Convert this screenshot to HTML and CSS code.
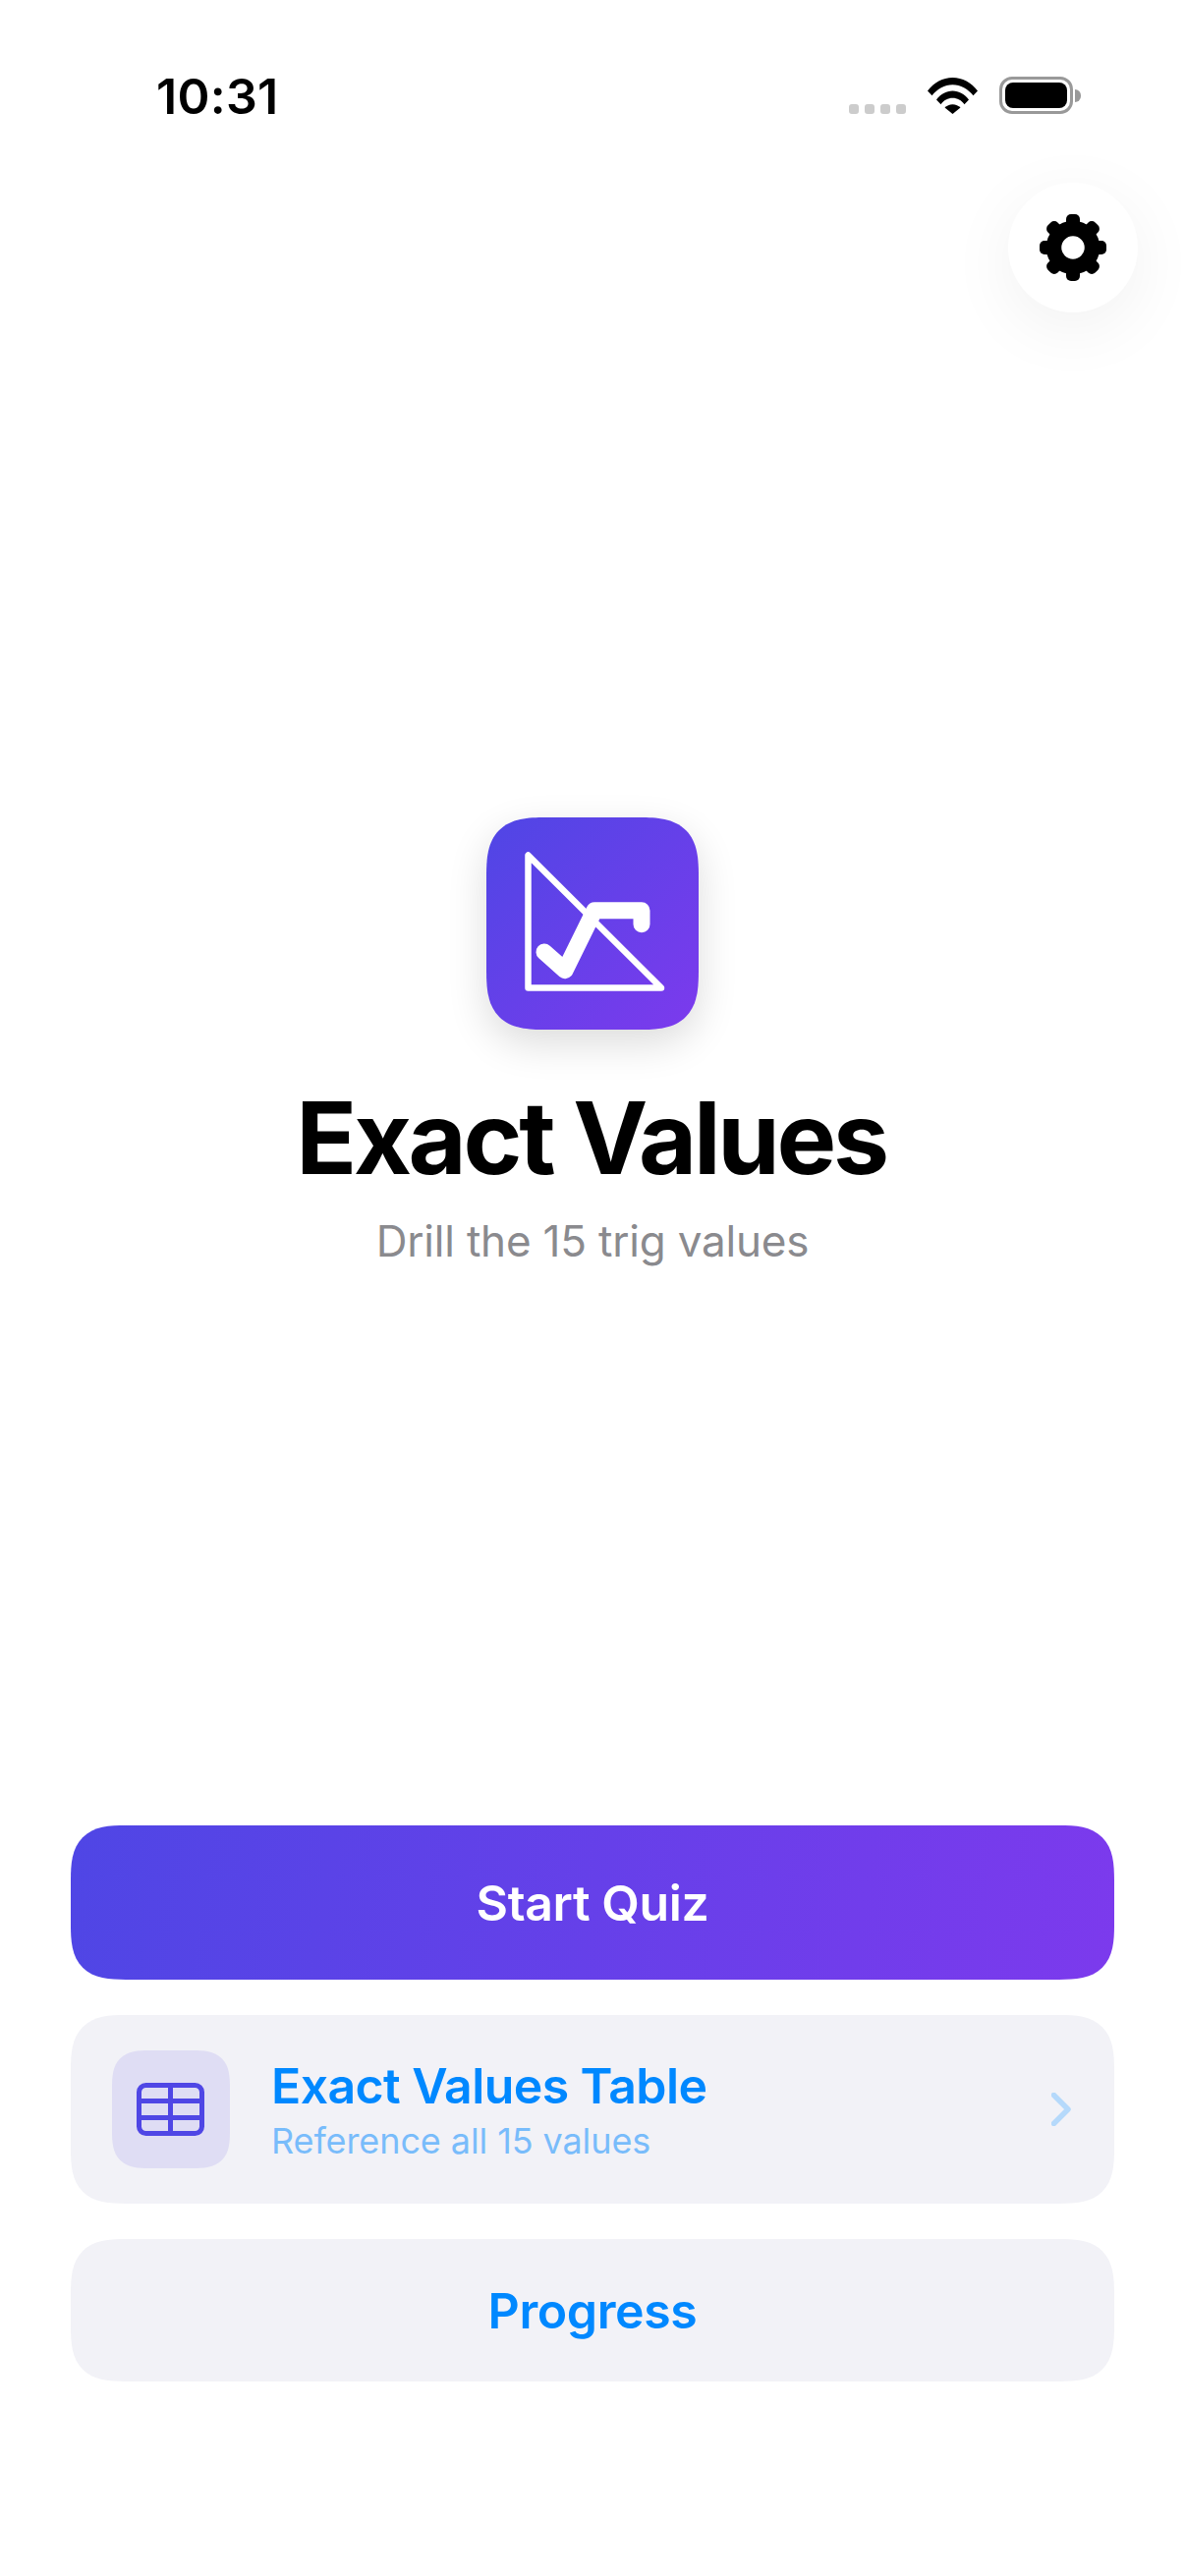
FILE: index.html
```html
<!DOCTYPE html>
<html lang="en">
<head>
    <meta charset="UTF-8">
    <meta name="viewport" content="width=device-width, initial-scale=1.0">
    <title>Exact Values</title>
    <link rel="stylesheet" href="styles.css">
</head>
<body>
    <div class="status-bar">
        <span class="time">10:31</span>
        <div class="status-icons">
            <div class="signal"><i></i><i></i><i></i><i></i></div>
            <svg class="wifi" width="51" height="37" viewBox="0 0 51 37">
                <path d="M0 13.5C6.500 5 15.500 0 25.500 0S44.500 5 51 13.500L46.500 18.200C41 11.500 33.800 7.200 25.500 7.200S10 11.500 4.500 18.200Z"/>
                <path d="M9 22.500C13 17 19 13.500 25.500 13.500S38 17 42 22.500L37.500 27.200C34.500 23.200 30.300 20.800 25.500 20.800S16.500 23.200 13.500 27.200Z"/>
                <path d="M17.500 30.500C19.500 28.500 22.300 27.200 25.500 27.200S31.500 28.500 33.500 30.500L25.500 37Z"/>
            </svg>
            <div class="battery"><div class="battery-fill"></div></div>
            <div class="battery-cap"></div>
        </div>
    </div>

    <div class="toolbar">
        <button class="settings-btn">
            <svg width="68" height="68" viewBox="0 0 68 68">
                <g class="gear-teeth">
                    <rect x="27" y="0" width="14" height="16" rx="5"/>
                    <rect x="27" y="0" width="14" height="16" rx="5" transform="rotate(45 34 34)"/>
                    <rect x="27" y="0" width="14" height="16" rx="5" transform="rotate(90 34 34)"/>
                    <rect x="27" y="0" width="14" height="16" rx="5" transform="rotate(135 34 34)"/>
                    <rect x="27" y="0" width="14" height="16" rx="5" transform="rotate(180 34 34)"/>
                    <rect x="27" y="0" width="14" height="16" rx="5" transform="rotate(225 34 34)"/>
                    <rect x="27" y="0" width="14" height="16" rx="5" transform="rotate(270 34 34)"/>
                    <rect x="27" y="0" width="14" height="16" rx="5" transform="rotate(315 34 34)"/>
                </g>
                <circle class="gear-ring" cx="34" cy="34" r="19.500"/>
            </svg>
        </button>
    </div>

    <div class="hero">
        <div class="app-icon">
            <svg width="216" height="216" viewBox="0 0 216 216">
                <path class="triangle" d="M42.500 38.500V173.500H178Z"/>
                <path class="root" d="M59 137L80 155.700L110 94.700H158V108.700"/>
            </svg>
        </div>
        <h1>Exact Values</h1>
        <p class="tagline">Drill the 15 trig values</p>
    </div>

    <div class="actions">
        <button class="btn-start">Start Quiz</button>
        <div class="table-card">
            <div class="table-tile">
                <svg width="69" height="54" viewBox="0 0 69 54">
                    <rect x="2.500" y="2.500" width="64" height="49" rx="7"/>
                    <path d="M2 18.500H67M2 35.500H67M34.500 2V52"/>
                </svg>
            </div>
            <div class="table-text">
                <div class="table-title">Exact Values Table</div>
                <div class="table-sub">Reference all 15 values</div>
            </div>
            <svg class="chevron" width="20" height="34" viewBox="0 0 20 34">
                <path d="M2.500 2.500L17 17L2.500 31.500"/>
            </svg>
        </div>
        <button class="btn-progress">Progress</button>
    </div>
</body>
</html>
```

FILE: styles.css
```css
* {
    box-sizing: border-box;
}
body {
    margin: 0;
    width: 1206px;
    height: 2622px;
    display: flex;
    flex-direction: column;
    background: #fff;
    color: #000;
    font-family: Inter, 'Noto Sans', sans-serif;
    overflow: hidden;
}
button {
    font-family: inherit;
    border: none;
    cursor: pointer;
}

/* status bar */
.status-bar {
    height: 186px;
    padding: 66px 106px 0 159px;
    display: flex;
    justify-content: space-between;
    align-items: flex-start;
}
.time {
    font-size: 50px;
    font-weight: 600;
    line-height: 64px;
    letter-spacing: 0.3px;
}
.status-icons {
    display: flex;
    align-items: flex-start;
    padding-top: 12px;
}
.signal {
    display: flex;
    gap: 6px;
    margin-top: 28px;
    margin-right: 22px;
}
.signal i {
    width: 10px;
    height: 10px;
    border-radius: 3px;
    background: #ccc;
}
.wifi {
    margin-top: 1px;
    margin-right: 22px;
}
.battery {
    width: 75px;
    height: 38px;
    border: 3px solid #999;
    border-radius: 13px;
    padding: 3px;
}
.battery-fill {
    height: 100%;
    background: #000;
    border-radius: 8px;
}
.battery-cap {
    width: 6px;
    height: 13px;
    margin: 13px 0 0 2px;
    background: #999;
    border-radius: 0 6px 6px 0;
}

/* settings */
.toolbar {
    display: flex;
    justify-content: flex-end;
    padding-right: 48px;
}
.settings-btn {
    width: 132px;
    height: 132px;
    padding: 0;
    border-radius: 50%;
    background: #fff;
    display: flex;
    align-items: center;
    justify-content: center;
    box-shadow: 0 16px 70px rgba(0,0,0,0.06);
}
.gear-teeth rect {
    fill: #000;
}
.gear-ring {
    fill: none;
    stroke: #000;
    stroke-width: 15.500;
}

/* hero */
.hero {
    margin-top: 514px;
    display: flex;
    flex-direction: column;
    align-items: center;
}
.app-icon {
    width: 216px;
    height: 216px;
    border-radius: 60px;
    corner-shape: superellipse(1.5);
    background: linear-gradient(135deg, #4f46e5, #7c3aed);
    box-shadow: 0 14px 40px rgba(0,0,0,0.14);
}
.app-icon svg {
    display: block;
}
.triangle {
    fill: none;
    stroke: #fff;
    stroke-width: 6.500;
    stroke-linejoin: round;
}
.root {
    fill: none;
    stroke: #fff;
    stroke-width: 17;
    stroke-linecap: round;
    stroke-linejoin: round;
}
h1 {
    margin: 48px 3px 0 0;
    font-size: 102px;
    font-weight: 700;
    line-height: 124px;
    letter-spacing: -3.300px;
}
.tagline {
    margin: 16px 0 0;
    font-size: 44px;
    line-height: 54px;
    letter-spacing: -0.200px;
    color: #8a8a8e;
}

/* buttons */
.actions {
    margin-top: auto;
    padding: 0 72px 198px;
    display: flex;
    flex-direction: column;
    gap: 36px;
}
.btn-start {
    height: 157px;
    border-radius: 56px;
    corner-shape: superellipse(1.5);
    background: linear-gradient(98.400deg, #4f46e5, #7c3aed);
    color: #fff;
    font-size: 50px;
    font-weight: 600;
    letter-spacing: -0.400px;
}
.table-card {
    height: 192px;
    padding: 0 44px 0 42px;
    border-radius: 56px;
    corner-shape: superellipse(1.5);
    background: #f2f2f7;
    display: flex;
    align-items: center;
}
.table-tile {
    width: 120px;
    height: 120px;
    border-radius: 38px;
    corner-shape: superellipse(1.5);
    background: #dfddf4;
    display: flex;
    align-items: center;
    justify-content: center;
}
.table-tile svg {
    margin-right: 2px;
}
.table-tile rect,
.table-tile path {
    fill: none;
    stroke: #4f46e5;
    stroke-width: 5;
}
.table-text {
    flex: 1;
    margin-left: 42px;
}
.table-title {
    color: #0088ff;
    font-size: 50px;
    font-weight: 600;
    line-height: 60px;
    letter-spacing: -0.600px;
}
.table-sub {
    margin-top: 4px;
    color: #0088ff;
    opacity: 0.5;
    font-size: 36px;
    line-height: 44px;
    letter-spacing: -0.100px;
}
.chevron path {
    fill: none;
    stroke: #b5d9fb;
    stroke-width: 5.500;
    stroke-linecap: round;
    stroke-linejoin: round;
}
.btn-progress {
    height: 145px;
    border-radius: 56px;
    corner-shape: superellipse(1.5);
    background: #f2f2f7;
    color: #0088ff;
    font-size: 50px;
    font-weight: 600;
    letter-spacing: -0.400px;
}
```
